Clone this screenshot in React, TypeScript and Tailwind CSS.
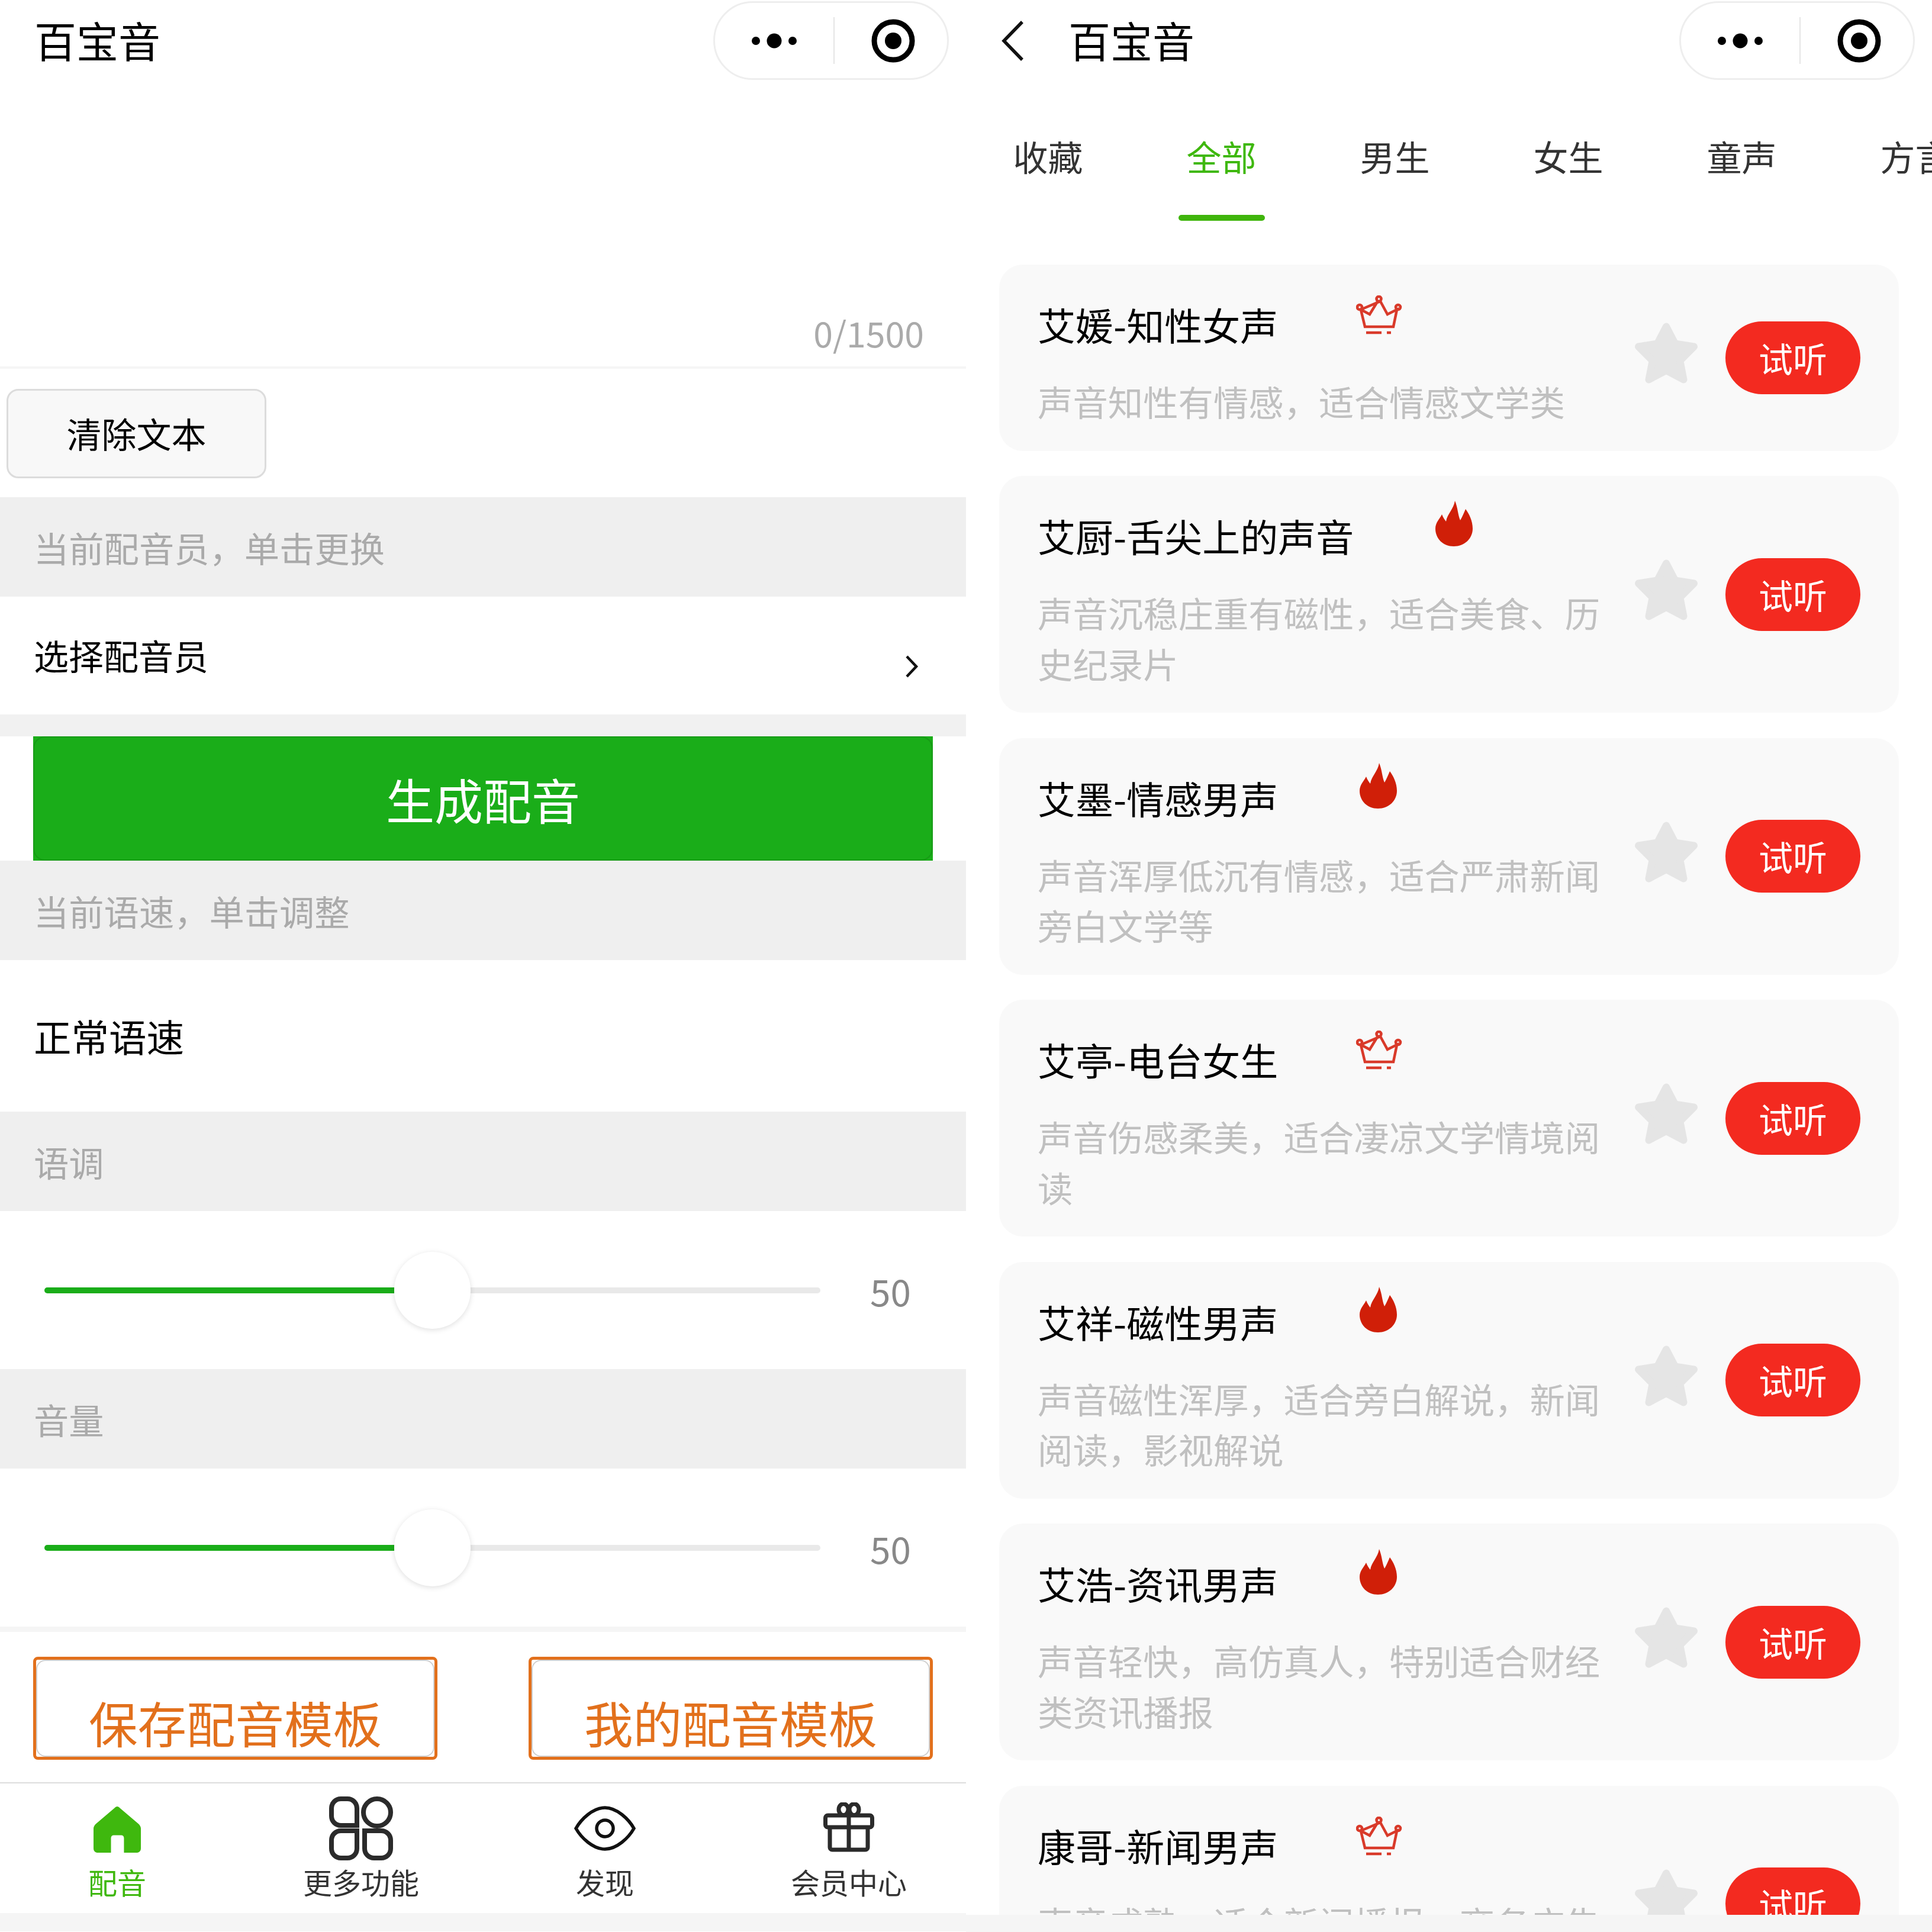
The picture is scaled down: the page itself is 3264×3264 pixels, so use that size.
const VOICES = [
  { name: '艾媛-知性女声', desc: '声音知性有情感，适合情感文学类', badge: 'crown' },
  { name: '艾厨-舌尖上的声音', desc: '声音沉稳庄重有磁性，适合美食、历史纪录片', badge: 'fire' },
  { name: '艾墨-情感男声', desc: '声音浑厚低沉有情感，适合严肃新闻旁白文学等', badge: 'fire' },
  { name: '艾亭-电台女生', desc: '声音伤感柔美，适合凄凉文学情境阅读', badge: 'crown' },
  { name: '艾祥-磁性男声', desc: '声音磁性浑厚，适合旁白解说，新闻阅读，影视解说', badge: 'fire' },
  { name: '艾浩-资讯男声', desc: '声音轻快，高仿真人，特别适合财经类资讯播报', badge: 'fire' },
  { name: '康哥-新闻男声', desc: '声音成熟，适合新闻播报，商务广告等内容配音', badge: 'crown' },
]

const TABS = ['收藏', '全部', '男生', '女生', '童声', '方言']

function Capsule() {
  return (
    <div className="flex h-[133px] w-[398px] items-center rounded-full border-[3px] border-[#eeeeee] bg-white">
      <div className="flex w-[200px] flex-none items-center justify-center">
        <svg width="78" height="26" viewBox="0 0 78 26">
          <circle cx="8" cy="13" r="7" fill="#000" />
          <circle cx="39" cy="13" r="12.5" fill="#000" />
          <circle cx="70" cy="13" r="7" fill="#000" />
        </svg>
      </div>
      <div className="h-[79px] w-[2px] bg-[#e5e5e5]" />
      <div className="flex flex-1 items-center justify-center pl-[8px]">
        <svg width="74" height="74" viewBox="0 0 74 74">
          <circle cx="37" cy="37" r="32" fill="none" stroke="#000" strokeWidth="9" />
          <circle cx="37" cy="37" r="14" fill="#000" />
        </svg>
      </div>
    </div>
  )
}

function SectionBar({ label }: { label: string }) {
  return (
    <div className="flex h-[168px] items-center bg-[#efefef] pl-[57px] text-[59.300px] text-[#aaaaaa]">{label}</div>
  )
}

function Slider() {
  return (
    <div className="flex h-[267px] items-center pl-[75px]">
      <div className="relative h-[10px] w-[1311px] rounded-full bg-[#e9e9e9]">
        <div className="h-full w-[591px] rounded-l-full bg-[#1aad19]" />
        <div className="absolute left-[591px] top-[-60px] h-[130px] w-[129px] rounded-full bg-white shadow-[0_2px_10px_rgba(0,0,0,0.13)]" />
      </div>
      <span className="ml-[84px] text-[62px] leading-none text-[#888888]">50</span>
    </div>
  )
}

function OutlineButton({ label }: { label: string }) {
  return (
    <div className="relative flex h-[174px] w-[683px] items-center justify-center rounded-[8px] border-[5px] border-[#e2701c] pt-[46px] text-[82.500px] leading-none text-[#e2701c]">
      <div className="absolute inset-0 rounded-[16px] border-2 border-[#cfcfcf]" />
      {label}
    </div>
  )
}

function TabItem({ label, active, children }: { label: string; active?: boolean; children: React.ReactNode }) {
  return (
    <div className="flex flex-1 flex-col items-center">
      <div className="flex h-[132px] items-center justify-center">{children}</div>
      <span className={`text-[49px] leading-[60px] ${active ? 'text-[#3fb80e]' : 'text-[#333333]'}`}>{label}</span>
    </div>
  )
}

function LeftPanel() {
  return (
    <div className="flex h-full w-[1632px] flex-none flex-col bg-white">
      <div className="flex h-[137px] justify-between pl-[58px] pr-[29px] pt-[2px]">
        <span className="mt-[19px] text-[71px] leading-[90px] text-black">百宝音</span>
        <Capsule />
      </div>
      <div className="flex h-[482px] items-end justify-end pb-[12px] pr-[71px] text-[59px] leading-[90px] text-[#aaaaaa]">0/1500</div>
      <div className="h-[4px] bg-[#f5f5f5]" />

      <div className="h-[217px] pl-[11px] pt-[34px]">
        <div className="flex h-[151px] w-[439px] items-center justify-center rounded-[20px] border-[3px] border-[#dcdcdc] bg-[#f8f8f8] text-[59px] text-black">清除文本</div>
      </div>
      <SectionBar label="当前配音员，单击更换" />

      <div className="flex h-[199px] items-center justify-between pl-[57px] pr-[79px]">
        <span className="text-[59px] text-black">选择配音员</span>
        <svg className="mt-[36px]" width="26" height="40" viewBox="0 0 26 40">
          <path d="M5 3 L21 20 L5 37" fill="none" stroke="#111" strokeWidth="4.5" />
        </svg>
      </div>
      <div className="h-[37px] bg-[#f1f1f1]" />

      <div className="px-[56px]">
        <div className="relative flex h-[210px] items-center justify-center bg-[#1aad19] text-[82px] text-white">
          <div className="absolute inset-0 rounded-[20px] border-2 border-[#179b16]" />
          生成配音
        </div>
      </div>
      <SectionBar label="当前语速，单击调整" />
      <div className="flex h-[256px] items-center pl-[57px] text-[63.500px] text-black">正常语速</div>
      <SectionBar label="语调" />
      <Slider />
      <SectionBar label="音量" />
      <Slider />
      <div className="h-[9px] bg-[#f5f5f5]" />

      <div className="flex h-[254px] justify-between px-[56px] pt-[42px]">
        <OutlineButton label="保存配音模板" />
        <OutlineButton label="我的配音模板" />
      </div>

      <div className="-mx-[8px] flex h-[221px] border-t-2 border-[#dddddd] bg-white pt-[4px]">
        <TabItem label="配音" active>
          <svg className="mt-[16px]" width="80" height="80" viewBox="0 0 84 82">
            <path fillRule="evenodd" fill="#3fb80e" d="M42 0 C44 0 45 1 47 3 L80 31 C82 33 84 36 84 39 L84 74 C84 79 81 82 76 82 L8 82 C3 82 0 79 0 74 L0 39 C0 36 2 33 4 31 L37 3 C39 1 40 0 42 0 Z M31 82 L54 82 L54 56 C54 53 52 51 49 51 L36 51 C33 51 31 53 31 56 Z" />
          </svg>
        </TabItem>
        <TabItem label="更多功能">
          <svg className="mt-[12px]" width="108" height="108" viewBox="0 0 108 108" fill="none" stroke="#2b2b2b" strokeWidth="8">
            <path d="M20 4 H31 C40 4 47 11 47 20 V49 H20 C11 49 4 42 4 33 V20 C4 11 11 4 20 4 Z" />
            <circle cx="81" cy="27" r="23" />
            <path d="M20 58 H47 V88 C47 97 40 104 31 104 H20 C11 104 4 97 4 88 V74 C4 65 11 58 20 58 Z" />
            <path d="M60 58 H88 C97 58 104 65 104 74 V88 C104 97 97 104 88 104 H76 C67 104 60 97 60 88 Z" />
          </svg>
        </TabItem>
        <TabItem label="发现">
          <svg className="mt-[12px]" width="104" height="76" viewBox="0 0 104 76" fill="none" stroke="#111" strokeWidth="5.500">
            <path d="M3 38 C12 22 32 3 52 3 C72 3 92 22 101 38 C92 54 72 73 52 73 C32 73 12 54 3 38 Z" />
            <circle cx="52" cy="38" r="14" />
          </svg>
        </TabItem>
        <TabItem label="会员中心">
          <svg className="mt-[8px]" width="86" height="84" viewBox="0 0 86 84" fill="none" stroke="#2b2b2b" strokeWidth="7">
            <ellipse cx="34" cy="12" rx="8" ry="9.500" />
            <ellipse cx="52" cy="12" rx="8" ry="9.500" />
            <rect x="3.500" y="22" width="79" height="20" rx="4" />
            <path d="M11 42 V76 A4 4 0 0 0 15 80 H71 A4 4 0 0 0 75 76 V42" />
            <path d="M43 22 V80" />
          </svg>
        </TabItem>
      </div>
      <div className="h-[31px] bg-[#f5f5f5]" />
    </div>
  )
}

function Crown() {
  return (
    <svg className="mb-[28px] ml-[132px]" width="78" height="68" viewBox="0 0 78 68" fill="none" stroke="#d93a2a" strokeWidth="4.500">
      <circle cx="38.500" cy="6" r="4" />
      <circle cx="6" cy="20" r="4" />
      <circle cx="71" cy="20" r="4" />
      <path d="M8 24 L23 32 L36.500 10 M41 10 L53 32 L69 24 L63 53 L15 53 L8 24 Z" />
      <path d="M17 63 L43 63 M52 63 L59 63" />
    </svg>
  )
}

function Flame() {
  return (
    <svg className="mb-[38px] ml-[138px]" width="63" height="77" viewBox="0 0 63 77">
      <path fill="#d01f08" d="M31 77 C13 77 0 64 0 47 C0 37 7 31 11 23 C13 28 15 31 18 35 C20 22 31 14 33 0 C38 12 38 24 42 33 C45 28 48 21 51 14 C57 22 63 34 63 47 C63 64 49 77 31 77 Z" />
    </svg>
  )
}

function Star() {
  return (
    <svg className="mb-[16px] ml-auto flex-none" width="108" height="106" viewBox="0 0 105 102">
      <path fill="#e5e5e5" stroke="#e5e5e5" strokeWidth="12" strokeLinejoin="round" d="M52.500 8 L67 36 L98 41 L75 64 L81 95 L52.500 80 L24 95 L30 64 L7 41 L38 36 Z" />
    </svg>
  )
}

function VoiceCard({ name, desc, badge }: { name: string; desc: string; badge: string }) {
  return (
    <div className="flex flex-none items-center rounded-[40px] bg-[#f9f9f9] pl-[65px] pr-[65px]">
      <div className="w-[960px] flex-none pb-[41px] pt-[60px]">
        <div className="flex h-[80px] items-center text-[64px] leading-none text-black">
          <span>{name}</span>
          {badge === 'crown' ? <Crown /> : <Flame />}
        </div>
        <p className="mt-[48px] text-[59.400px] leading-[85.600px] text-[#c0c0c0]">{desc}</p>
      </div>
      <Star />
      <div className="ml-[46px] flex h-[123px] w-[228px] flex-none items-center justify-center rounded-full bg-[#f32a20] text-[58px] text-white">试听</div>
    </div>
  )
}

function RightPanel() {
  return (
    <div className="flex h-full w-[1632px] flex-none flex-col overflow-hidden bg-white">
      <div className="flex h-[137px] flex-none items-start pl-[59px] pr-[29px] pt-[2px]">
        <svg className="mt-[33px] flex-none" width="40" height="68" viewBox="0 0 40 68">
          <path d="M36 2 L5 34 L36 66" fill="none" stroke="#111" strokeWidth="5.500" />
        </svg>
        <span className="ml-[74px] mt-[19px] text-[71px] leading-[90px] text-black">百宝音</span>
        <div className="ml-auto"><Capsule /></div>
      </div>

      <div className="-ml-[8px] flex h-[236px] flex-none">
        {TABS.map((tab, i) => (
          <div key={tab} className="flex w-[293px] flex-none flex-col items-center">
            <span className={`mt-[82px] text-[59px] leading-[90px] ${i === 1 ? 'text-[#3fb80e]' : 'text-[#333333]'}`}>{tab}</span>
            {i === 1 && <div className="mt-[54px] h-[10px] w-[146px] rounded-full bg-[#3fb50c]" />}
          </div>
        ))}
      </div>

      <div className="flex min-h-0 flex-1 flex-col gap-[42.400px] overflow-hidden px-[56px] pt-[74px]">
        {VOICES.map(v => <VoiceCard key={v.name} {...v} />)}
      </div>
      <div className="h-[29px] flex-none bg-[#f5f5f5]" />
    </div>
  )
}

export default function App() {
  return (
    <div className="flex h-[3264px] w-[3264px] overflow-hidden bg-white [font-family:'Noto_Sans_CJK_SC','Noto_Sans',sans-serif]">
      <LeftPanel />
      <RightPanel />
    </div>
  )
}
